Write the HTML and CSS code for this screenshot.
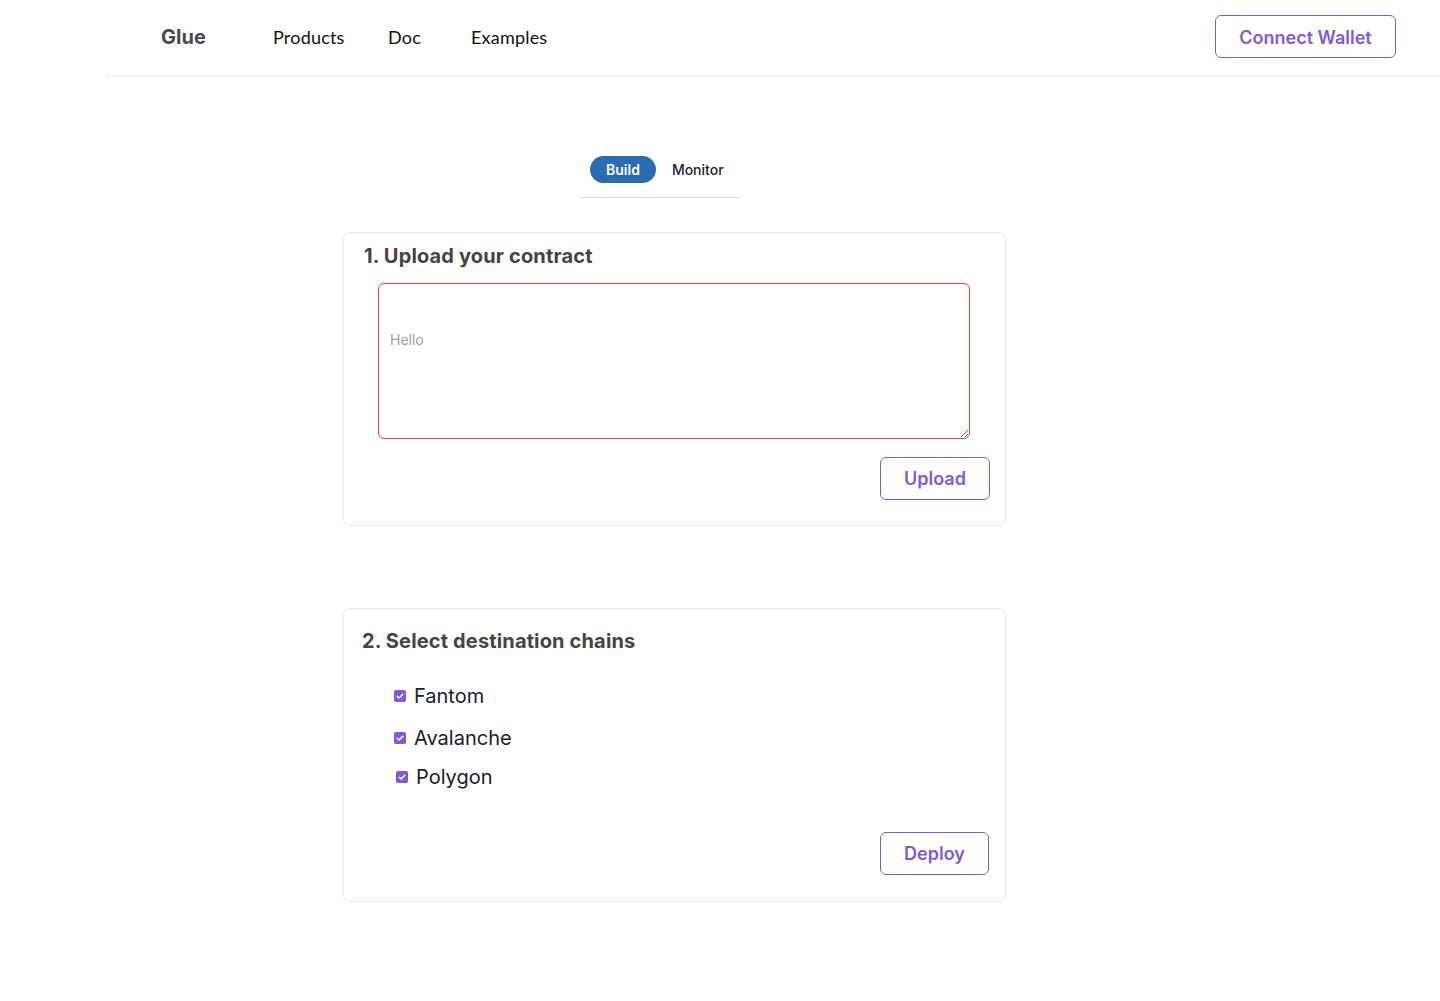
FILE: index.html
```html
<!DOCTYPE html>
<html>
<head>
<meta charset="utf-8">
<link rel="stylesheet" href="styles.css">
</head>
<body>
<header class="topbar">
  <div class="brand">Glue</div>
  <nav class="nav">
    <a class="nav-link">Products</a>
    <a class="nav-link">Doc</a>
    <a class="nav-link">Examples</a>
  </nav>
  <button class="btn btn-wallet">Connect Wallet</button>
</header>

<main class="main">
  <div class="tabs">
    <span class="tab tab-active">Build</span>
    <span class="tab">Monitor</span>
  </div>

  <section class="card card-upload">
    <h2 class="card-title">1. Upload your contract</h2>
    <textarea class="contract-input" placeholder="Hello"></textarea>
    <div class="actions actions-upload">
      <button class="btn btn-action">Upload</button>
    </div>
  </section>

  <section class="card card-chains">
    <h2 class="card-title card-title-2">2. Select destination chains</h2>
    <ul class="chain-list">
      <li class="chain"><span class="check"><svg viewBox="0 0 12 12" width="12" height="12"><path d="M3.2 6.2 L5.1 8 L8.8 4.2" fill="none" stroke="#fff" stroke-width="1.5" stroke-linecap="round" stroke-linejoin="round"/></svg></span>Fantom</li>
      <li class="chain chain-2"><span class="check"><svg viewBox="0 0 12 12" width="12" height="12"><path d="M3.2 6.2 L5.1 8 L8.8 4.2" fill="none" stroke="#fff" stroke-width="1.5" stroke-linecap="round" stroke-linejoin="round"/></svg></span>Avalanche</li>
      <li class="chain chain-3"><span class="check"><svg viewBox="0 0 12 12" width="12" height="12"><path d="M3.2 6.2 L5.1 8 L8.8 4.2" fill="none" stroke="#fff" stroke-width="1.5" stroke-linecap="round" stroke-linejoin="round"/></svg></span>Polygon</li>
    </ul>
    <div class="actions actions-deploy">
      <button class="btn btn-action btn-deploy">Deploy</button>
    </div>
  </section>
</main>
</body>
</html>
```

FILE: styles.css
```css
* { box-sizing: border-box; }

body {
  margin: 0;
  background: #ffffff;
  font-family: Inter, "Liberation Sans", sans-serif;
  color: #1a202c;
}

.topbar {
  margin-left: 105px;
  height: 77px;
  border-bottom: 2px solid #f4f4f4;
  display: flex;
  align-items: flex-start;
  padding: 15px 44px 0 56px;
}

.brand {
  font-family: Inter, "Liberation Sans", sans-serif;
  font-weight: 700;
  font-size: 20px;
  color: #4a4a4a;
  line-height: 42px;
  padding-top: 1px;
  width: 112px;
}

.nav {
  display: grid;
  grid-template-columns: 115px 83px auto;
  flex: 1;
  padding-top: 1px;
}

.nav-link {
  font-family: Lato, "Open Sans", sans-serif;
  font-size: 18px;
  line-height: 42px;
  color: #111;
  letter-spacing: 0.2px;
}

.btn {
  background: #fff;
  border: 1px solid #805ad5;
  border-radius: 6px;
  color: #805ad5;
  font-family: Inter, "Liberation Sans", sans-serif;
  font-weight: 600;
  font-size: 18px;
  cursor: pointer;
  padding: 0;
}

.btn-wallet {
  width: 181px;
  height: 43px;
  padding-top: 1px;
}

.main {
  padding-top: 79px;
  padding-bottom: 100px;
}

.tabs {
  margin-left: 580px;
  width: 160px;
  display: flex;
  align-items: center;
  padding: 0 0 14px 10px;
  border-bottom: 1px solid #dcdcdc;
  margin-bottom: 34px;
}

.tab {
  font-size: 14px;
  font-weight: 500;
  color: #1a202c;
  height: 27px;
  line-height: 27px;
  padding: 0 16px;
  border-radius: 14px;
}

.tab-active {
  background: #2b6cb0;
  color: #fff;
  font-weight: 600;
}

.card {
  margin-left: 343px;
  width: 663px;
  border: 1px solid #e2e8f0;
  border-radius: 7px;
  padding: 11px 15px 25px 20px;
}

.card-title {
  margin: 0;
  font-size: 20px;
  line-height: 24px;
  font-weight: 700;
  color: #444444;
  letter-spacing: 0.15px;
}

.contract-input {
  display: block;
  margin: 15px 0 0 14px;
  width: 592px;
  height: 156px;
  border: 1px solid #e53e3e;
  border-radius: 6px;
  padding: 47px 11px 8px;
  font-family: Inter, "Liberation Sans", sans-serif;
  font-size: 14px;
  outline: none;
}

.contract-input::placeholder {
  color: #a0a0a0;
}

.actions {
  display: flex;
  justify-content: flex-end;
}

.actions-upload {
  margin-top: 18px;
}

.btn-action {
  width: 110px;
  height: 43px;
}

.card-chains {
  margin-top: 82px;
  padding-top: 20px;
  padding-left: 18px;
  padding-right: 16px;
  padding-bottom: 26px;
}

.chain-list {
  list-style: none;
  margin: 31px 0 0 0;
  padding: 0 0 0 32px;
}

.chain {
  display: flex;
  align-items: center;
  font-size: 20px;
  line-height: 24px;
  color: #1a202c;
}

.chain-2 { margin-top: 18px; }
.chain-3 { margin-top: 15px; padding-left: 2px; }

.check {
  width: 12px;
  height: 12px;
  border-radius: 2px;
  background: #805ad5;
  margin-right: 8px;
  display: inline-flex;
}

.actions-deploy {
  margin-top: 43px;
}

.btn-deploy {
  width: 109px;
}
```
